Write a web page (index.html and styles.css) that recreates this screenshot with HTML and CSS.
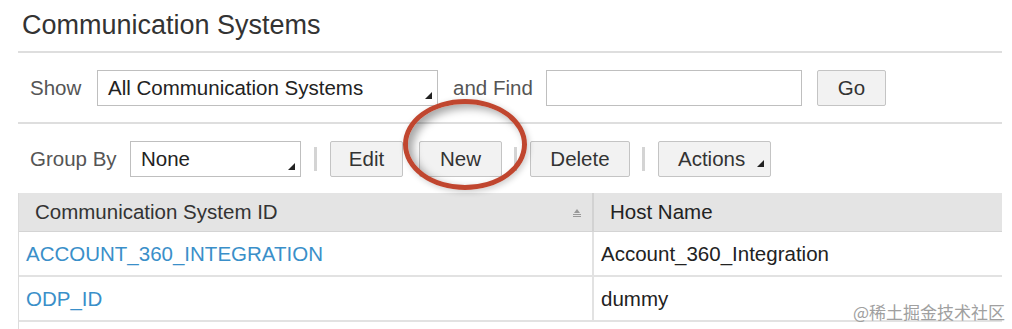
FILE: index.html
```html
<!DOCTYPE html>
<html lang="en">

<head>
    <meta charset="UTF-8">
    <title>Communication Systems</title>
    <link rel="stylesheet" href="styles.css">
</head>

<body>
    <main class="page">
        <h1 class="title">Communication Systems</h1>

        <div class="toolbar">
            <span class="label label-show">Show</span>
            <div class="select select-show">All Communication Systems<span class="corner"></span></div>
            <span class="label label-find">and Find</span>
            <input class="find" type="text">
            <button class="btn btn-go">Go</button>
        </div>

        <div class="toolbar">
            <span class="label label-group">Group By</span>
            <div class="select select-group">None<span class="corner"></span></div>
            <span class="sep"></span>
            <button class="btn btn-edit">Edit</button>
            <button class="btn btn-new">New</button>
            <span class="sep"></span>
            <button class="btn btn-delete">Delete</button>
            <span class="sep"></span>
            <button class="btn btn-actions">Actions<span class="corner"></span></button>
            <!-- red marker round the New button -->
            <span class="marker"></span>
        </div>

        <div class="table">
            <div class="row head">
                <div class="cell col-id">Communication System ID
                    <svg class="sort" width="10" height="8" viewBox="0 0 10 8">
                        <path d="M5 0 L8 4 L2 4 Z" fill="#999" />
                        <rect x="1" y="5" width="8" height="1" fill="#999" />
                        <rect x="1" y="7" width="8" height="1" fill="#999" />
                    </svg>
                </div>
                <div class="cell col-host">Host Name</div>
            </div>
            <div class="row">
                <div class="cell col-id"><a class="link">ACCOUNT_360_INTEGRATION</a></div>
                <div class="cell col-host">Account_360_Integration</div>
            </div>
            <div class="row">
                <div class="cell col-id"><a class="link">ODP_ID</a></div>
                <div class="cell col-host">dummy</div>
            </div>
            <div class="row"></div>
        </div>

        <div class="watermark">@稀土掘金技术社区</div>
    </main>
</body>

</html>
```

FILE: styles.css
```css
* {
    box-sizing: border-box;
}

body {
    margin: 0;
    background: #fff;
    font-family: "Liberation Sans", Arial, sans-serif;
    color: #333;
    overflow: hidden;
}

.page {
    position: relative;
    padding-left: 18px;
    width: 1002px;
}

.title {
    margin: 0;
    height: 51px;
    padding: 10px 0 0 4px;
    font-size: 27px;
    font-weight: normal;
    color: #333;
}

.toolbar {
    position: relative;
    display: flex;
    align-items: center;
    height: 71px;
    padding-left: 12px;
    border-top: 2px solid #dedede;
    font-size: 20.5px;
}

.label {
    color: #555;
}

.label-show {
    width: 67px;
}

.label-find {
    width: 93px;
}

.label-group {
    width: 100px;
}

.select {
    position: relative;
    height: 36px;
    line-height: 34px;
    padding-left: 10px;
    border: 1px solid #bfbfbf;
    background: #fff;
    color: #222;
    margin-right: 15px;
}

.select-show {
    width: 341px;
}

.select-group {
    width: 171px;
    margin-right: 13px;
}

.corner {
    position: absolute;
    right: 5px;
    bottom: 6px;
    width: 0;
    height: 0;
    border-left: 7px solid transparent;
    border-bottom: 7px solid #222;
}

.find {
    width: 256px;
    height: 36px;
    border: 1px solid #bfbfbf;
    margin: 0 15px 0 0;
}

.btn {
    position: relative;
    height: 36px;
    padding: 0;
    border: 1px solid #c4c4c4;
    border-radius: 2px;
    background: #f2f2f2;
    font-family: inherit;
    font-size: 20.5px;
    color: #333;
}

.btn-go {
    width: 69px;
}

.btn-edit {
    width: 73px;
    margin-right: 16px;
}

.btn-new {
    width: 83px;
}

.btn-delete {
    width: 100px;
}

.btn-actions {
    width: 113px;
    text-align: left;
    padding-left: 19px;
}

.btn-actions .corner {
    right: 6px;
    bottom: 9px;
}

.sep {
    width: 3px;
    height: 24px;
    background: #d4d4d4;
    margin: 0 13px 0 0;
}

.btn-new + .sep,
.btn-delete + .sep {
    margin-left: 12px;
}

.marker {
    position: absolute;
    left: 385px;
    top: -25px;
    width: 124px;
    height: 91px;
    border: 5px solid #c0462f;
    border-radius: 50%;
    box-shadow: inset 5px 4px 9px rgba(0, 0, 0, 0.35), 2px 2px 6px rgba(0, 0, 0, 0.2);
}

.table {
    border-left: 1px solid #dcdcdc;
    font-size: 20.5px;
}

.row {
    display: flex;
    height: 45px;
    border-bottom: 2px solid #e2e2e2;
}

.row.head {
    height: 39px;
    background: #e4e4e4;
    border-bottom: 1px solid #d4d4d4;
    color: #333;
}

.cell {
    display: flex;
    align-items: center;
}

.col-id {
    position: relative;
    width: 575px;
    padding-left: 7px;
    border-right: 2px solid #e2e2e2;
}

.head .col-id {
    padding-left: 16px;
    border-right-color: #d2d2d2;
}

.col-host {
    padding-left: 7px;
    color: #222;
}

.head .col-host {
    padding-left: 16px;
}

.sort {
    position: absolute;
    right: 10px;
    top: 16px;
}

.link {
    color: #3a8fc9;
}

.watermark {
    position: absolute;
    right: -3px;
    top: 299px;
    font-family: "Noto Sans CJK SC", sans-serif;
    font-size: 17px;
    color: #a0a0a0;
}
```
